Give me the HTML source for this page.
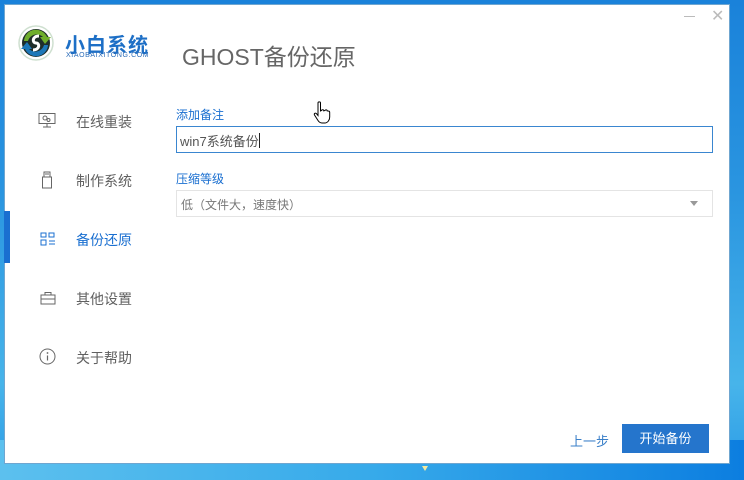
<!DOCTYPE html>
<html><head><meta charset="utf-8"><style>
*{margin:0;padding:0;box-sizing:border-box}
body{width:744px;height:480px;overflow:hidden;position:relative;font-family:"Liberation Sans","Noto Sans CJK SC",sans-serif;background:linear-gradient(180deg,#1a82da 0%,#2a95e0 40%,#47b4ea 80%,#2a9ae6 100%)}
.bg2{position:absolute;left:0;top:440px;width:744px;height:40px;background:linear-gradient(90deg,#5cc0ee,#37aaea 50%,#0c7ee0)}
.win{position:absolute;left:4px;top:4px;width:726px;height:460px;background:#fff;border:1px solid #6fa6d0}
.t{position:absolute;white-space:nowrap}
.nav{position:absolute;left:76px;font-size:14px;color:#606060}
.ic{position:absolute;left:38px}
</style></head><body>
<div class="bg2"></div>
<div class="win"></div>
<svg class="t" style="left:18px;top:25px" width="36" height="36" viewBox="0 0 36 36">
<circle cx="18" cy="18" r="17" fill="none" stroke="#cfe0d0" stroke-width="1.5"/>
<circle cx="18" cy="18" r="14" fill="#1f2e2a"/>
<path d="M6 16 A12 12 0 0 1 29 12 L33 12 L27 19 L22 12 L25 12 A9 9 0 0 0 10 16Z" fill="#6fae2c"/>
<path d="M30 20 A12 12 0 0 1 7 24 L3 24 L9 17 L14 24 L11 24 A9 9 0 0 0 26 20Z" fill="#1d78b8"/>
<path d="M21 11 C14 11 14 18 18 18 C22 18 22 25 15 25" fill="none" stroke="#fff" stroke-width="3"/>
</svg>
<div class="t" style="left:65px;top:29px;font-size:20px;font-weight:bold;color:#1d6fc6;letter-spacing:1px">小白系统</div>
<div class="t" style="left:66px;top:52px;font-size:7px;color:#2a6bb8;letter-spacing:0.6px">XIAOBAIXITONG.COM</div>
<div class="t" style="left:182px;top:38px;font-size:23px;color:#666">GHOST备份还原</div>
<div class="t" style="left:684px;top:16px;width:11px;height:1px;background:#bbb"></div>
<div class="t" style="left:711px;top:9px;font-size:16px;color:#bbb;line-height:16px">✕</div>
<div class="t" style="left:4px;top:211px;width:6px;height:52px;background:#1a6fd0"></div>
<svg class="ic" style="top:112px" width="18" height="16" viewBox="0 0 18 16"><rect x="1" y="1.5" width="16" height="10" fill="none" stroke="#666"/><circle cx="7" cy="6" r="2" fill="none" stroke="#666"/><circle cx="10.5" cy="8" r="1.5" fill="none" stroke="#666"/><path d="M9 12v3M5 15h8" stroke="#666"/></svg>
<div class="nav" style="top:112px">在线重装</div>
<svg class="ic" style="top:171px;left:42px" width="10" height="18" viewBox="0 0 10 18"><rect x="2" y="1" width="6" height="5" fill="none" stroke="#666"/><rect x="0.5" y="6" width="9" height="11" fill="none" stroke="#666"/><path d="M4 2v2M6 2v2" stroke="#666"/></svg>
<div class="nav" style="top:171px">制作系统</div>
<svg class="ic" style="top:232px;left:40px" width="16" height="14" viewBox="0 0 16 14"><rect x="1" y="1" width="5" height="4" fill="none" stroke="#1a6fd0"/><rect x="1" y="8" width="5" height="5" fill="none" stroke="#1a6fd0"/><rect x="9" y="1" width="5" height="4" fill="none" stroke="#1a6fd0"/><path d="M9 9h6M9 12h6" stroke="#1a6fd0"/></svg>
<div class="nav" style="top:230px;color:#1a6fd0">备份还原</div>
<svg class="ic" style="top:291px;left:40px" width="16" height="14" viewBox="0 0 16 14"><path d="M5 4V1.5h6V4" fill="none" stroke="#666"/><rect x="1" y="4" width="14" height="9" fill="none" stroke="#666"/><path d="M1 8h14" stroke="#666"/></svg>
<div class="nav" style="top:289px">其他设置</div>
<svg class="ic" style="top:348px;left:39px" width="17" height="17" viewBox="0 0 17 17"><circle cx="8.5" cy="8.5" r="7.5" fill="none" stroke="#666"/><circle cx="8.5" cy="5" r="0.9" fill="#666"/><path d="M8.5 7.5v5" stroke="#666" stroke-width="1.2"/></svg>
<div class="nav" style="top:348px">关于帮助</div>
<div class="t" style="left:176px;top:106px;font-size:12px;color:#1a6fd0">添加备注</div>
<div class="t" style="left:176px;top:126px;width:537px;height:27px;border:1px solid #3a86d0;font-size:13px;color:#555;padding:4px 0 0 3px">win7系统备份<span style="display:inline-block;width:1px;height:15px;background:#222;vertical-align:-2px"></span></div>
<div class="t" style="left:176px;top:170px;font-size:12px;color:#1a6fd0">压缩等级</div>
<div class="t" style="left:176px;top:190px;width:537px;height:27px;border:1px solid #e4e4e4;font-size:12px;color:#777;padding:5px 0 0 4px">低（文件大，速度快）</div>
<div class="t" style="left:690px;top:201px;width:0;height:0;border-left:4px solid transparent;border-right:4px solid transparent;border-top:5px solid #999"></div>
<svg class="t" style="left:313px;top:101px" width="18" height="24" viewBox="0 0 18 24"><path d="M5 2c0-1.5 2.5-1.5 2.5 0v8l1-.5c0-1 2.3-1 2.3.3l1.2-.3c.3-1 2.2-.8 2.2.4l1 .1c.8 0 1.5.6 1.5 1.5V16c0 3-2 6-5 6H9c-2 0-3-1-4-2.5L1.5 14c-.8-1.5 1-2.5 2-1.3L5 14.5Z" fill="#fff" stroke="#000" stroke-width="1"/></svg>
<div class="t" style="left:570px;top:431px;font-size:13px;color:#3a7fc8">上一步</div>
<div class="t" style="left:622px;top:424px;width:87px;height:29px;background:#2575cc;color:#fff;font-size:13px;text-align:center;line-height:29px">开始备份</div>
<div class="t" style="left:422px;top:466px;width:0;height:0;border-left:3px solid transparent;border-right:3px solid transparent;border-top:5px solid #f4e9a0"></div>
</body></html>
